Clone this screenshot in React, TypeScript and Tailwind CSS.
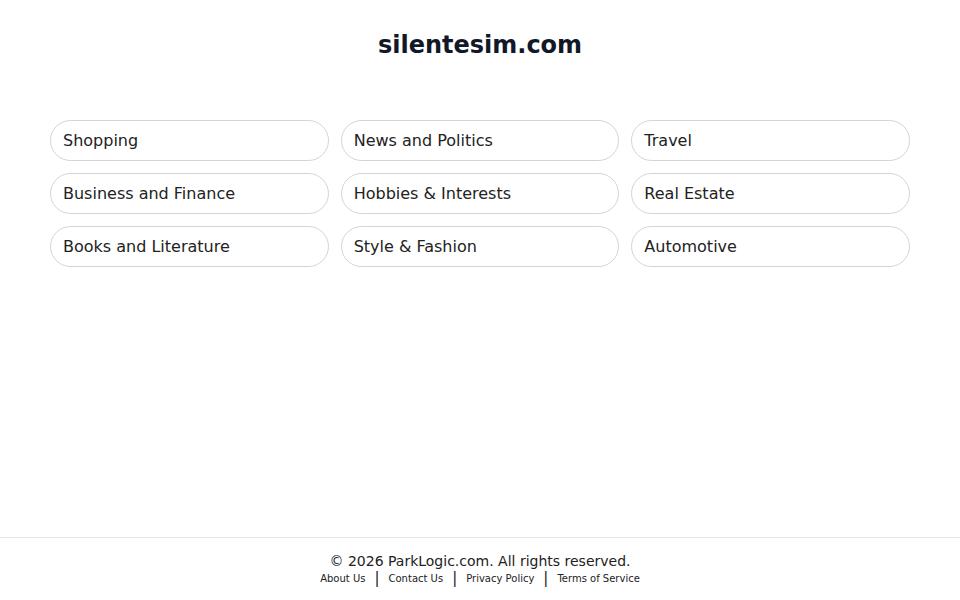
import React from "react";

const items = [
  "Shopping",
  "News and Politics",
  "Travel",
  "Business and Finance",
  "Hobbies & Interests",
  "Real Estate",
  "Books and Literature",
  "Style & Fashion",
  "Automotive",
];

export default function App() {
  return (
    <div
      className="h-screen flex flex-col bg-white text-[#1f2328]"
      style={{ fontFamily: '"DejaVu Sans", sans-serif' }}
    >
      <main className="flex-1 px-[50px]">
        <h1 className="pt-[29px] text-center text-[24px] leading-[32px] font-bold text-[#111827]">
          silentesim.com
        </h1>
        <div className="mt-[59px] grid grid-cols-3 gap-x-[12px] gap-y-[12px]">
          {items.map((t) => (
            <a
              key={t}
              href="#"
              className="h-[41px] flex items-center pl-[12px] rounded-full border border-[#d4d4d4] text-[16px] text-[#222]"
            >
              {t}
            </a>
          ))}
        </div>
      </main>
      <footer className="h-[63px] border-t border-[#e5e5e5] flex flex-col items-center pt-[13px]">
        <div className="text-[14px] leading-[20px] text-[#222]">
          © 2026 ParkLogic.com. All rights reserved.
        </div>
        <div className="mt-[1px] flex items-center text-[10px] leading-[14px] text-[#222]">
          <a href="#">About Us</a>
          <span className="mx-[9px] text-[15px] leading-[14px] -translate-y-[1px]">|</span>
          <a href="#">Contact Us</a>
          <span className="mx-[9px] text-[15px] leading-[14px] -translate-y-[1px]">|</span>
          <a href="#">Privacy Policy</a>
          <span className="mx-[9px] text-[15px] leading-[14px] -translate-y-[1px]">|</span>
          <a href="#">Terms of Service</a>
        </div>
      </footer>
    </div>
  );
}
